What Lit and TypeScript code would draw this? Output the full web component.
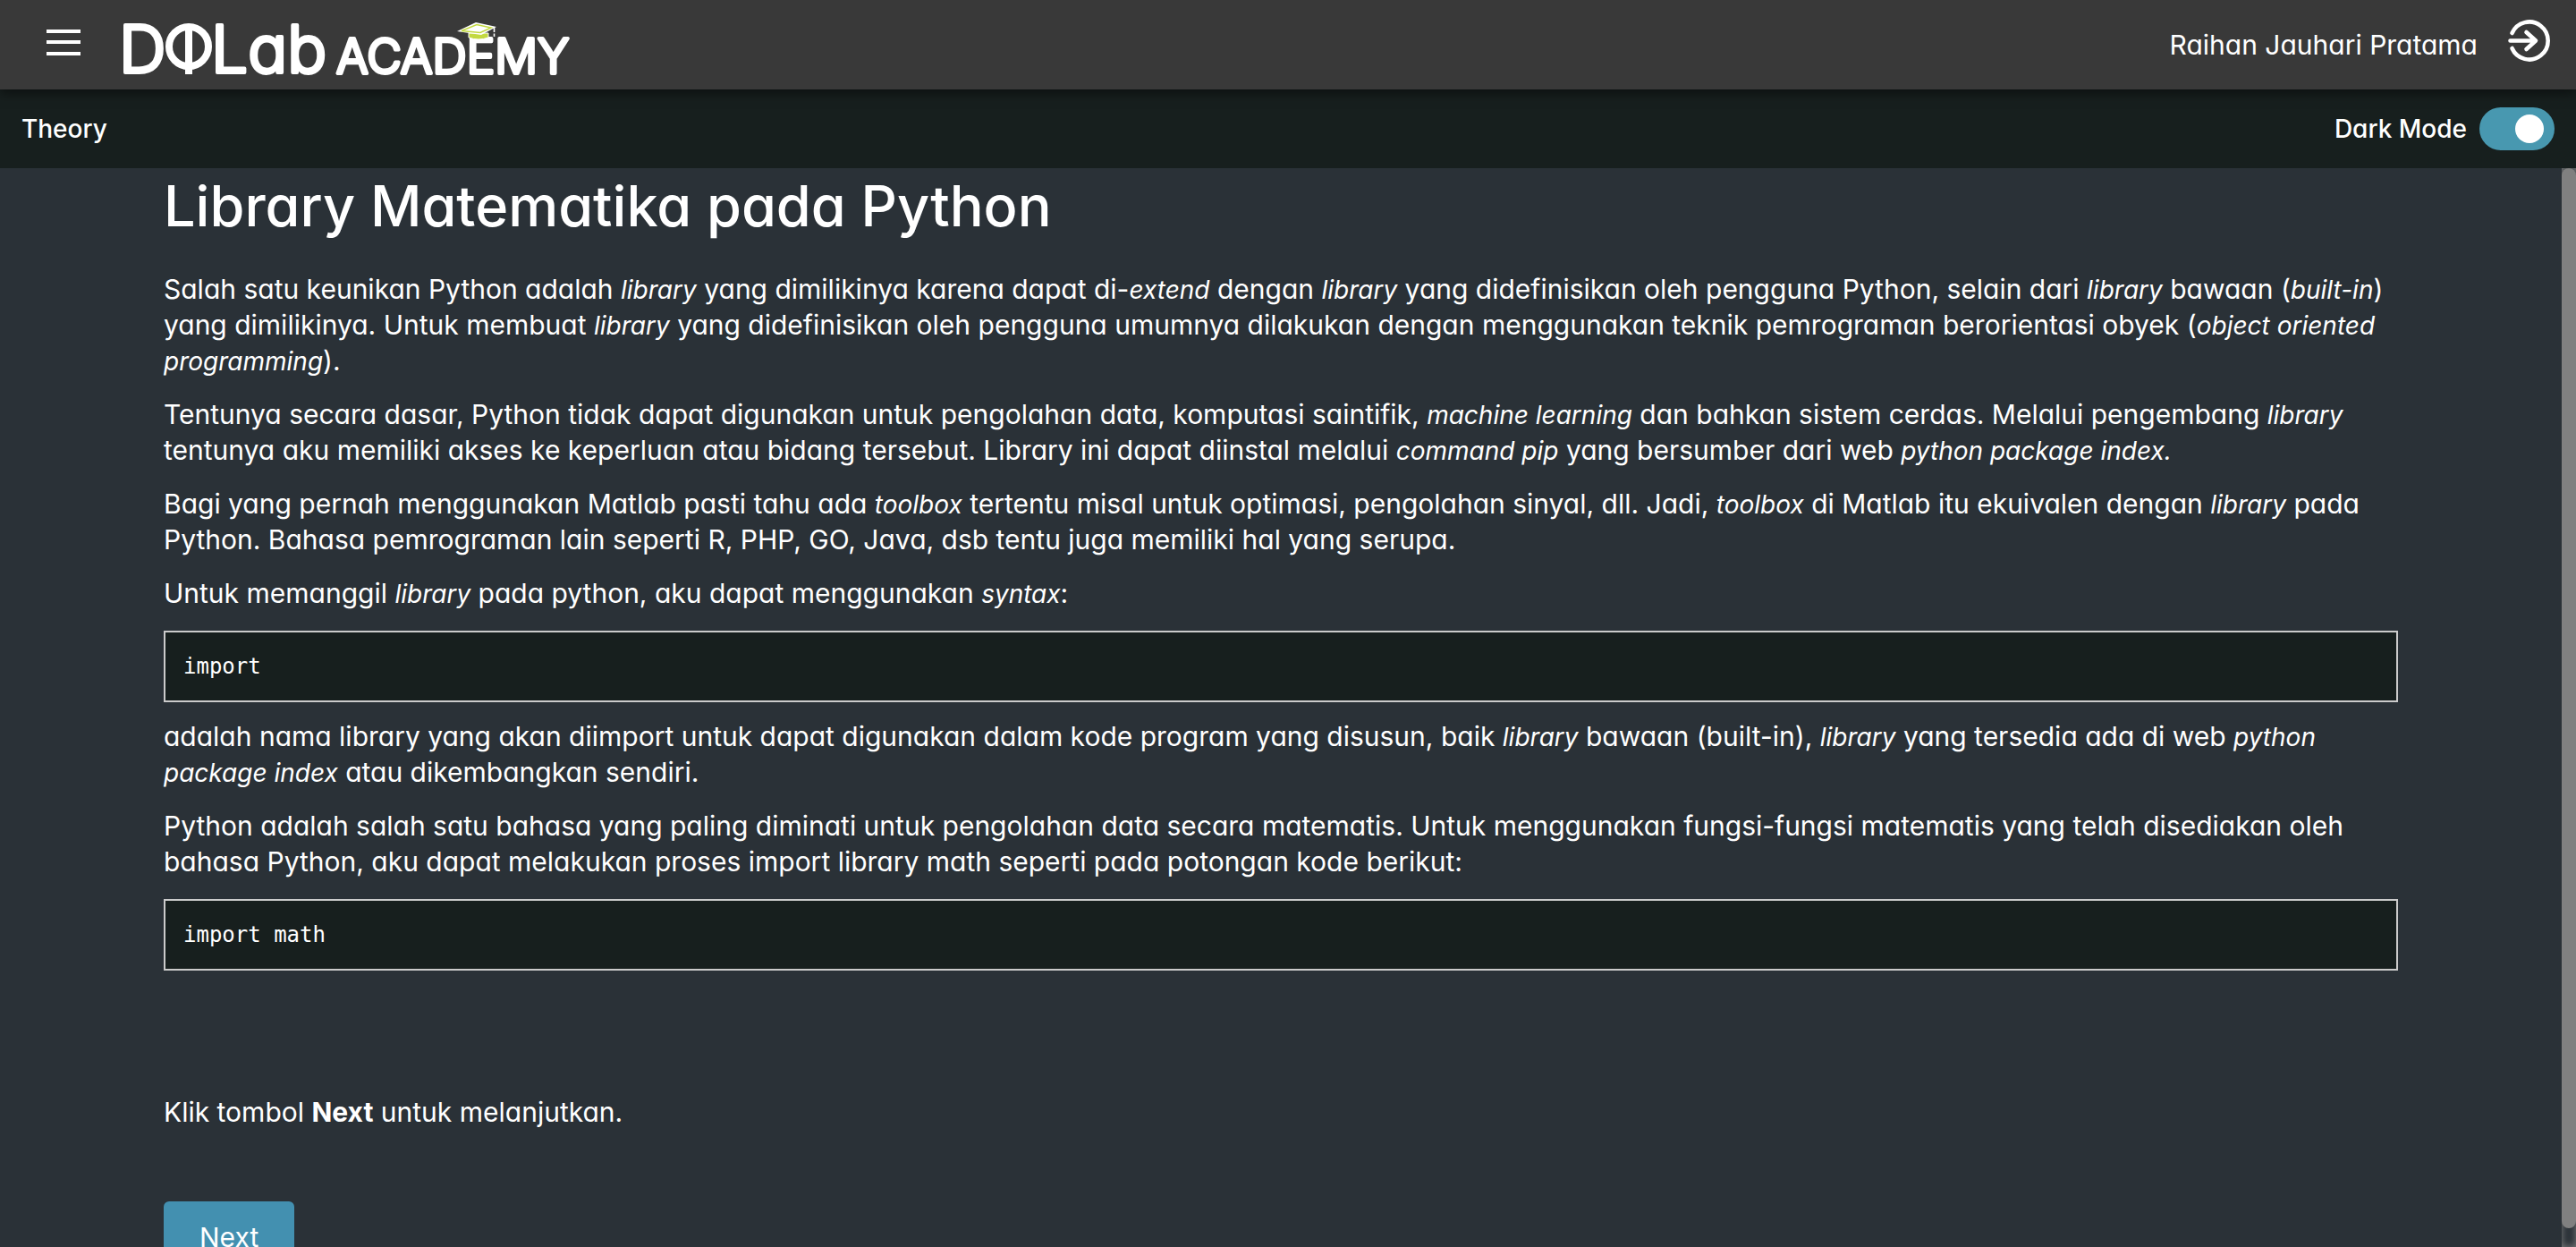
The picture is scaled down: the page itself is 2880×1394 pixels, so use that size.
import { LitElement, html, css } from "lit";
import { customElement, state } from "lit/decorators.js";

@customElement("academy-logo")
export class AcademyLogo extends LitElement {
  static styles = css`
    :host {
      display: block;
    }
    .logo {
      display: block;
      width: 520px;
      height: 72px;
      overflow: visible;
    }
    .word {
      font-family: Inter, "Open Sans", sans-serif;
      font-feature-settings: "cv11";
      fill: #fff;
      stroke: #fff;
      stroke-linejoin: round;
    }
    .large {
      font-size: 73px;
      font-weight: 300;
      stroke-width: 4px;
    }
    .small {
      font-size: 53px;
      font-weight: 300;
      stroke-width: 4px;
    }
  `;

  render() {
    return html`
      <svg class="logo" viewBox="132 16 520 72" role="img" aria-label="DQLab Academy">
        <text class="word large" x="133" y="81">D</text>
        <circle cx="211" cy="52" r="22" fill="none" stroke="#fff" stroke-width="8" />
        <path d="M211 28V83" stroke="#fff" stroke-width="8" />
        <text class="word large" x="236" y="81">Lab</text>
        <text class="word small" x="376" y="82">ACADEMY</text>
        <path d="M524 37v5q11 4 22 0v-5z" fill="#c3d941" stroke="#fff" stroke-width="1" />
        <path d="M511 35L532 25L555 30L538 39z" fill="#fff" />
        <path d="M516 34.500L533 27.500L549 31L537 36.500z" fill="#fff" stroke="#c3d941" stroke-width="1.500" />
        <path d="M552.500 31V36M552.500 37.500V41" stroke="#fff" stroke-width="1.600" />
      </svg>
    `;
  }
}

@customElement("app-root")
export class AppRoot extends LitElement {
  @state() private dark = true;

  static styles = css`
    :host {
      display: block;
      font-family: Inter, "Open Sans", sans-serif;
      font-feature-settings: "cv11";
      font-size: 30px;
      line-height: 40px;
      color: #fff;
    }
    * {
      box-sizing: border-box;
    }
    .page {
      display: grid;
      grid-template-rows: auto auto minmax(0, 1fr);
      height: 100vh;
      background: #2a3137;
    }
    .header {
      display: flex;
      align-items: center;
      height: 100px;
      padding: 0 28px 0 50px;
      background: #393939;
      box-shadow: 0 4px 12px rgba(0, 0, 0, 0.5);
      z-index: 1;
    }
    .icon-button {
      display: block;
      padding: 0;
      border: 0;
      background: none;
      color: inherit;
      cursor: pointer;
    }
    .icon-button svg {
      display: block;
    }
    .brand {
      margin: 4px auto 0 40px;
    }
    .user {
      margin: 0 32px 0 0;
    }
    .bar {
      display: flex;
      align-items: center;
      justify-content: space-between;
      height: 88px;
      padding: 0 24px;
      background: #171f1e;
      font-size: 28px;
      font-weight: 500;
    }
    .section {
      margin: 0;
      font-size: inherit;
      font-weight: inherit;
    }
    .mode {
      display: flex;
      align-items: center;
      gap: 14px;
      cursor: pointer;
    }
    .switch {
      appearance: none;
      display: flex;
      align-items: center;
      width: 84px;
      height: 48px;
      margin: 0;
      padding: 0 12px;
      border-radius: 24px;
      background: #777;
      cursor: pointer;
    }
    .switch::before {
      content: "";
      width: 32px;
      height: 32px;
      border-radius: 50%;
      background: #fff;
    }
    .switch:checked {
      justify-content: flex-end;
      background: #4898b0;
    }
    .body {
      display: grid;
      grid-template-columns: minmax(0, 1fr) 16px;
      min-height: 0;
    }
    .content {
      overflow-y: auto;
      scrollbar-width: none;
      padding: 0 183px 48px;
    }
    .title {
      margin: 6px 0 37px;
      font-size: 63px;
      line-height: 72px;
      font-weight: 500;
    }
    .text {
      margin: 0 0 20px;
    }
    .text em {
      font-size: 28px;
      line-height: 28px;
    }
    .code {
      margin: 22px 0 18px;
      padding: 18px 20px;
      border: 2px solid #cbcbcb;
      background: #171f1e;
      font-family: "DejaVu Sans Mono", monospace;
      font-size: 24px;
    }
    .closing {
      margin: 138px 0 80px;
    }
    .next {
      padding: 20px 40px;
      border: 0;
      border-radius: 6px;
      background: #4390b0;
      color: #fff;
      font: inherit;
      font-feature-settings: inherit;
      cursor: pointer;
    }
    .track {
      display: flex;
      flex-direction: column;
      padding-bottom: 21px;
      box-shadow: inset 0 0 8px #808080;
    }
    .thumb {
      flex: 1;
      border-radius: 8px;
      background: #808080;
    }
  `;

  private toggle(event: Event) {
    this.dark = (event.target as HTMLInputElement).checked;
  }

  render() {
    return html`
      <div class="page">
        <header class="header">
          <button class="icon-button" aria-label="Menu">
            <svg width="42" height="42" viewBox="0 0 42 42" stroke="currentColor" stroke-width="4">
              <path d="M2 6H40M2 18H40M2 31H40" />
            </svg>
          </button>
          <academy-logo class="brand"></academy-logo>
          <p class="user">Raihan Jauhari Pratama</p>
          <button class="icon-button" aria-label="Log out">
            <svg width="50" height="60" viewBox="0 0 50 60" fill="none" stroke="currentColor"
              stroke-width="4.600" stroke-linecap="round" stroke-linejoin="round">
              <path d="M6.500 17A21 21 0 1 1 6.500 34M4.500 25.500H32M22.500 16L33 25.500L22.500 35" />
            </svg>
          </button>
        </header>
        <div class="bar">
          <h2 class="section">Theory</h2>
          <label class="mode">
            Dark Mode
            <input class="switch" type="checkbox" role="switch" .checked=${this.dark} @change=${this.toggle} />
          </label>
        </div>
        <div class="body">
          <main class="content">
            <h1 class="title">Library Matematika pada Python</h1>
            <p class="text">
              Salah satu keunikan Python adalah <em>library</em> yang dimilikinya karena dapat di-<em>extend</em>
              dengan <em>library</em> yang didefinisikan oleh pengguna Python, selain dari <em>library</em> bawaan
              (<em>built-in</em>) yang dimilikinya. Untuk membuat <em>library</em> yang didefinisikan oleh pengguna
              umumnya dilakukan dengan menggunakan teknik pemrograman berorientasi obyek
              (<em>object oriented programming</em>).
            </p>
            <p class="text">
              Tentunya secara dasar, Python tidak dapat digunakan untuk pengolahan data, komputasi saintifik,
              <em>machine learning</em> dan bahkan sistem cerdas. Melalui pengembang <em>library</em> tentunya aku
              memiliki akses ke keperluan atau bidang tersebut. Library ini dapat diinstal melalui
              <em>command pip</em> yang bersumber dari web <em>python package index.</em>
            </p>
            <p class="text">
              Bagi yang pernah menggunakan Matlab pasti tahu ada <em>toolbox</em> tertentu misal untuk optimasi,
              pengolahan sinyal, dll. Jadi, <em>toolbox</em> di Matlab itu ekuivalen dengan <em>library</em> pada
              Python. Bahasa pemrograman lain seperti R, PHP, GO, Java, dsb tentu juga memiliki hal yang serupa.
            </p>
            <p class="text">
              Untuk memanggil <em>library</em> pada python, aku dapat menggunakan <em>syntax</em>:
            </p>
            <pre class="code"><code>import</code></pre>
            <p class="text">
              adalah nama library yang akan diimport untuk dapat digunakan dalam kode program yang disusun, baik
              <em>library</em> bawaan (built-in), <em>library</em> yang tersedia ada di web
              <em>python package index</em> atau dikembangkan sendiri.
            </p>
            <p class="text">
              Python adalah salah satu bahasa yang paling diminati untuk pengolahan data secara matematis. Untuk
              menggunakan fungsi-fungsi matematis yang telah disediakan oleh bahasa Python, aku dapat melakukan
              proses import library math seperti pada potongan kode berikut:
            </p>
            <pre class="code"><code>import math</code></pre>
            <p class="closing">Klik tombol <strong>Next</strong> untuk melanjutkan.</p>
            <button class="next">Next</button>
          </main>
          <div class="track" aria-hidden="true"><div class="thumb"></div></div>
        </div>
      </div>
    `;
  }
}
